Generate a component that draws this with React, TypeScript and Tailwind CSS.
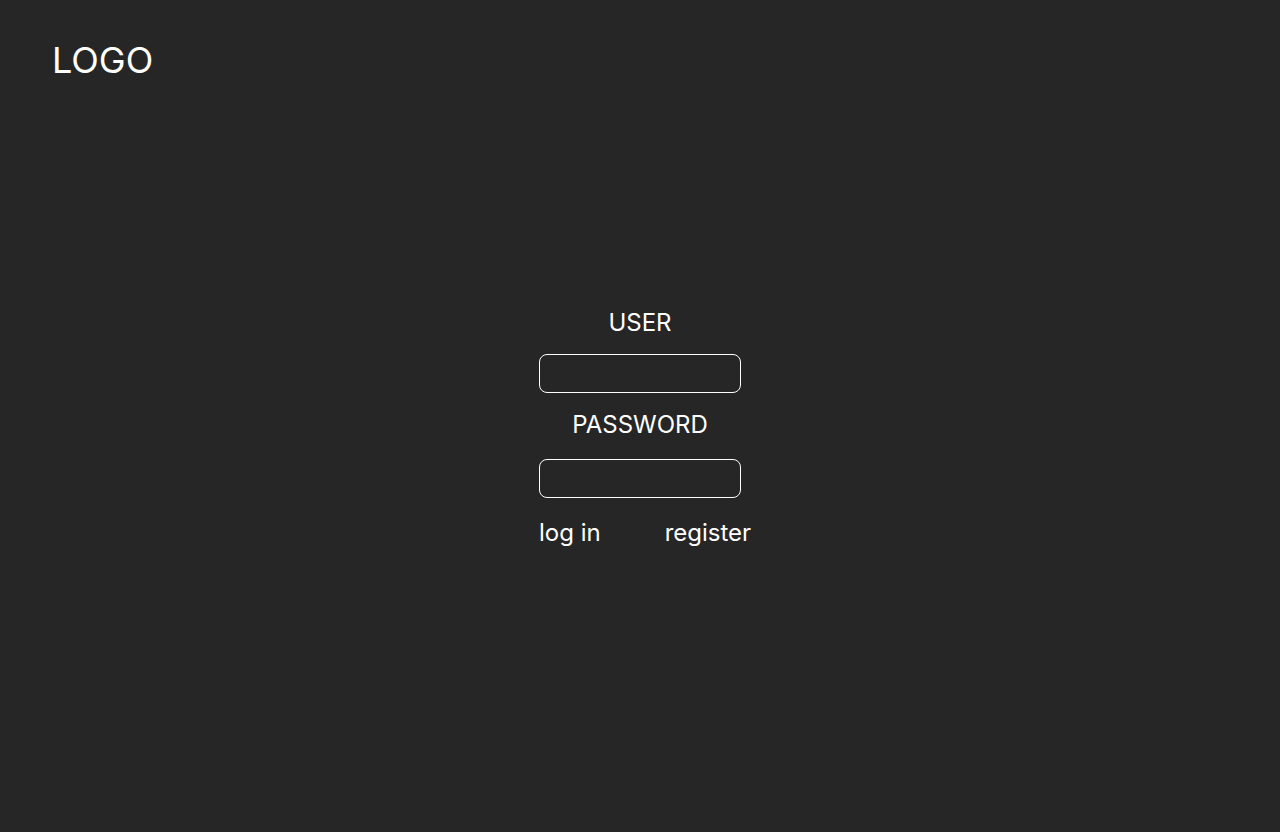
export default function App() {
  return (
    <div className="min-h-[832px] w-full bg-[#262626] text-white" style={{ fontFamily: 'Inter, "Noto Sans", sans-serif' }}>
      <header className="pl-[52px] pt-10">
        <div className="text-[36px] leading-10 font-normal">LOGO</div>
      </header>
      <main className="mt-[227px] flex justify-center">
        <form className="flex w-[202px] flex-col items-center" onSubmit={(e) => e.preventDefault()}>
          <label className="text-2xl leading-8">USER</label>
          <input type="text" className="mt-[15px] h-[39px] w-[202px] rounded-lg border border-white bg-transparent px-2 text-white outline-none" />
          <label className="mt-[16px] text-2xl leading-8">PASSWORD</label>
          <input type="password" className="mt-[18px] h-[39px] w-[202px] rounded-lg border border-white bg-transparent px-2 text-white outline-none" />
          <div className="mt-[19px] flex gap-16 self-start whitespace-nowrap text-2xl leading-8">
            <button type="submit" className="text-white">log in</button>
            <button type="button" className="text-white">register</button>
          </div>
        </form>
      </main>
    </div>
  );
}
